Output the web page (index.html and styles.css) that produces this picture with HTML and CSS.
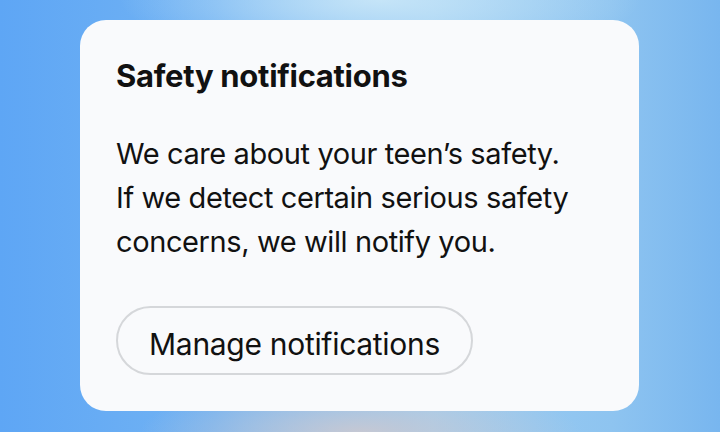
FILE: index.html
```html
<!DOCTYPE html>
<html>
<head>
<meta charset="utf-8">
<link rel="stylesheet" href="styles.css">
</head>
<body>
<div class="page">
  <div class="card">
    <h1 class="title">Safety notifications</h1>
    <p class="body">We care about your teen’s safety.<br>If we detect certain serious safety<br>concerns, we will notify you.</p>
    <button class="btn">Manage notifications</button>
  </div>
</div>
</body>
</html>
```
FILE: styles.css
```css
html, body { margin: 0; padding: 0; }
.page {
  width: 720px;
  height: 432px;
  overflow: hidden;
  box-sizing: border-box;
  padding: 20px 0 0 80px;
  background:
    radial-gradient(ellipse 260px 60px at 380px 0px, rgba(200,230,248,0.95), rgba(200,230,248,0) 100%),
    radial-gradient(ellipse 220px 50px at 360px 432px, rgba(200,200,210,0.95), rgba(200,200,210,0) 100%),
    linear-gradient(90deg, #5ea6f5 0%, #72b3f3 30%, #9ccdf2 60%, #8ec4f0 85%, #78b6ef 100%);
  font-family: Inter, "Noto Sans", sans-serif;
}
.card {
  width: 559px;
  height: 391px;
  box-sizing: border-box;
  background: #f9fafc;
  border-radius: 26px;
  padding: 34px 36px 0 36px;
  display: flex;
  flex-direction: column;
  align-items: flex-start;
}
.title {
  margin: 0;
  font-size: 31px;
  font-weight: 700;
  line-height: 44px;
  color: #111;
  letter-spacing: -0.3px;
}
.body {
  margin: 34px 0 0 0;
  font-size: 29px;
  line-height: 44px;
  color: #111;
  font-weight: 400;
  letter-spacing: -0.4px;
}
.btn {
  margin-top: 42px;
  width: 357px;
  height: 69px;
  box-sizing: border-box;
  border: 2px solid #d5d7da;
  border-radius: 35px;
  background: transparent;
  font-family: Inter, "Noto Sans", sans-serif;
  font-size: 30px;
  color: #111;
  letter-spacing: -0.3px;
  padding: 6px 0 0 0;
}
```
